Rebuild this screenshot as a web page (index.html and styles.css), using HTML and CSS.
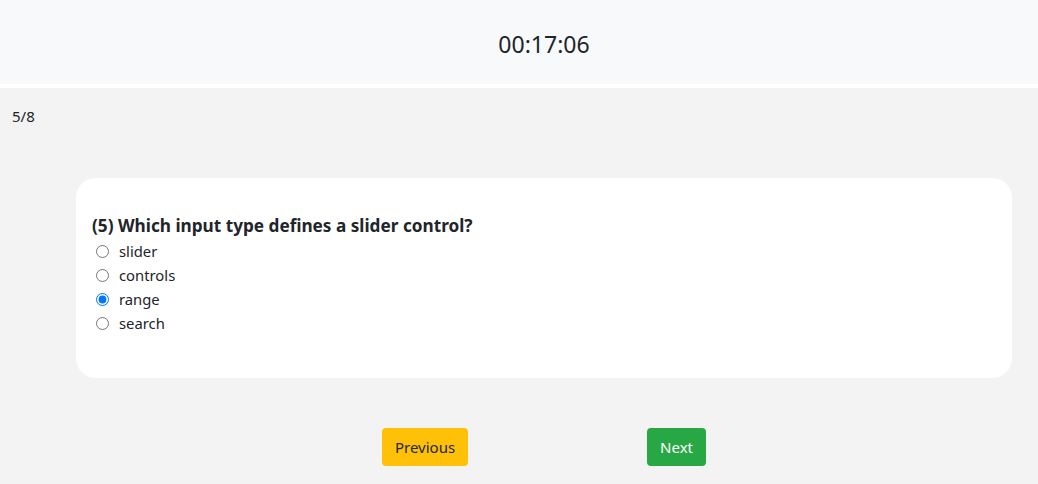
FILE: index.html
```html
<!DOCTYPE html>
<html lang="en">
<head>
<meta charset="utf-8">
<title>Quiz</title>
<link rel="stylesheet" href="styles.css">
</head>
<body>
<header class="topbar">
  <div class="topbar-inner">
    <h4 class="timer">00:17:06</h4>
  </div>
</header>
<main class="main">
  <div class="counter">5/8</div>
  <section class="card">
    <h5 class="question">(5) Which input type defines a slider control?</h5>
    <form class="options">
      <label class="option"><input type="radio" name="q5" value="slider"><span>slider</span></label>
      <label class="option"><input type="radio" name="q5" value="controls"><span>controls</span></label>
      <label class="option"><input type="radio" name="q5" value="range" checked><span>range</span></label>
      <label class="option"><input type="radio" name="q5" value="search"><span>search</span></label>
    </form>
  </section>
  <div class="nav">
    <button class="btn btn-prev" type="button">Previous</button>
    <button class="btn btn-next" type="button">Next</button>
  </div>
</main>
</body>
</html>
```
FILE: styles.css
```css
* { box-sizing: border-box; }
html, body { margin: 0; padding: 0; }
body {
  font-family: "Noto Sans", "Open Sans", sans-serif;
  color: #212529;
  background: #f3f3f3;
  min-height: 484px;
}
.topbar {
  background: #f8f9fa;
  height: 84px;
  border-bottom: 4px solid #ffffff;
  box-sizing: content-box;
}
.topbar-inner {
  margin: 0 26px 0 76px;
  height: 84px;
  display: flex;
  align-items: center;
  justify-content: center;
}
.timer {
  margin: 0;
  font-weight: 400;
  font-size: 23px;
  line-height: 1.2;
  padding-top: 5px;
}
.main {
  padding: 17px 26px 0 0;
}
.counter {
  margin-left: 12px;
  font-size: 15px;
  line-height: 22px;
  height: 22px;
}
.card {
  margin: 51px 0 0 76px;
  background: #ffffff;
  border-radius: 20px;
  height: 200px;
  padding: 35px 16px 0 16px;
}
.question {
  margin: 0;
  font-size: 17.2px;
  font-weight: 700;
  line-height: 26px;
}
.options {
  display: flex;
  flex-direction: column;
}
.option {
  display: flex;
  align-items: center;
  height: 24px;
  font-size: 14.8px;
}
.option input {
  margin: 0 10px 0 4px;
  width: 13px;
  height: 13px;
}
.nav {
  margin: 50px 0 0 76px;
  display: flex;
  justify-content: center;
  gap: 179px;
}
.btn {
  font-family: inherit;
  font-size: 15px;
  height: 38px;
  padding: 0 13px;
  border: none;
  border-radius: 4px;
  cursor: pointer;
}
.btn-prev {
  background: #ffc107;
  color: #212529;
}
.btn-next {
  background: #28a745;
  color: #ffffff;
}
```
